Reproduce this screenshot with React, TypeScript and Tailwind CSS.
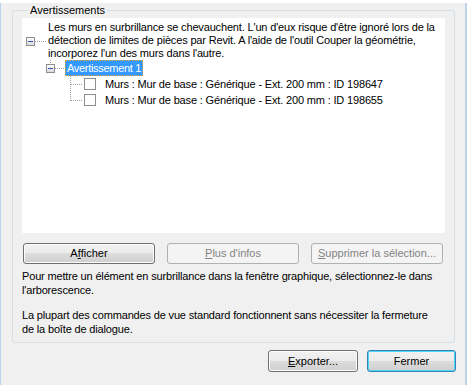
import React from "react";

const dot = "#a0a0a0";

function MinusBox({ x, y }: { x: number; y: number }) {
  return (
    <g>
      <defs>
        <linearGradient id="mb" x1="0" y1="0" x2="0" y2="1">
          <stop offset="0" stopColor="#ffffff" />
          <stop offset="1" stopColor="#d8d8d8" />
        </linearGradient>
      </defs>
      <rect x={x + 0.5} y={y + 0.5} width={8} height={8} fill="url(#mb)" stroke="#8e8f8f" />
      <line x1={x + 2} y1={y + 4.5} x2={x + 7} y2={y + 4.5} stroke="#2f56b5" />
    </g>
  );
}

function Checkbox() {
  return <div className="mt-[2px] h-[12px] w-[12px] shrink-0 border border-[#8f8f8f] bg-white" />;
}

function Button({
  children,
  disabled,
  primary,
  className,
}: {
  children: React.ReactNode;
  disabled?: boolean;
  primary?: boolean;
  className?: string;
}) {
  let look =
    "border-[#707070] bg-[linear-gradient(#f2f2f2,#ebebeb_50%,#dddddd_50%,#cfcfcf)] text-black shadow-[inset_0_0_0_1px_#fcfcfc]";
  if (disabled) look = "border-[#adb2b5] bg-[#f4f4f4] text-[#838383]";
  if (primary)
    look =
      "border-[#3c7fb1] bg-[linear-gradient(#f2f2f2,#ebebeb_50%,#dddddd_50%,#cfcfcf)] text-black shadow-[inset_0_0_0_1px_#48d8fb]";
  return (
    <button
      type="button"
      className={`flex items-center justify-center rounded-[3px] border text-[11px] leading-none ${look} ${className ?? ""}`}
    >
      {children}
    </button>
  );
}

export default function App() {
  return (
    <div className="h-[385px] w-[467px] border-b-2 border-l border-r-2 border-[#bcd3ec] bg-[#f0f0f0] font-['Liberation_Sans',Arial,sans-serif] text-black">
      <fieldset className="ml-[11px] mt-[3px] w-[443px] rounded-[3px] border border-[#d5dfe5] px-[9px] pb-[6px] pt-px">
        <legend className="ml-[6px] px-[2px] text-[11px] leading-[14px]">Avertissements</legend>

        <div className="h-[215px] bg-white pt-[3px] text-[11px] tracking-[-0.16px]">
          <div className="flex">
            <svg width="26" height="39" className="shrink-0" shapeRendering="crispEdges">
              <MinusBox x={4} y={16} />
              <line x1={13} y1={20.5} x2={25} y2={20.5} stroke={dot} strokeDasharray="1 1" />
            </svg>
            <div className="leading-[13px]">
              <div className="whitespace-nowrap">
                Les murs en surbrillance se chevauchent. L'un d'eux risque d'être ignoré lors de la
              </div>
              <div className="whitespace-nowrap">
                détection de limites de pièces par Revit. A l'aide de l'outil Couper la géométrie,
              </div>
              <div className="whitespace-nowrap">incorporez l'un des murs dans l'autre.</div>
            </div>
          </div>

          <div className="flex h-[16px]">
            <svg width="43" height="16" className="shrink-0" shapeRendering="crispEdges">
              <line x1={28.5} y1={-2} x2={28.5} y2={4} stroke={dot} strokeDasharray="1 1" />
              <MinusBox x={24} y={4} />
              <line x1={33} y1={8.5} x2={43} y2={8.5} stroke={dot} strokeDasharray="1 1" />
            </svg>
            <span className="flex h-[16px] items-center whitespace-nowrap bg-[#3399ff] px-[2px] tracking-[-0.3px] text-white outline-1 -outline-offset-1 outline-dotted outline-[#e8a33d]">
              Avertissement 1
            </span>
          </div>

          <div className="flex h-[16px]">
            <svg width="62" height="16" className="shrink-0" shapeRendering="crispEdges">
              <line x1={48.5} y1={0} x2={48.5} y2={16} stroke={dot} strokeDasharray="1 1" />
              <line x1={49} y1={8.5} x2={61} y2={8.5} stroke={dot} strokeDasharray="1 1" />
            </svg>
            <Checkbox />
            <span className="ml-[9px] whitespace-nowrap leading-[16px]">
              Murs : Mur de base : Générique - Ext. 200 mm : ID 198647
            </span>
          </div>
          <div className="flex h-[16px]">
            <svg width="62" height="16" className="shrink-0" shapeRendering="crispEdges">
              <line x1={48.5} y1={0} x2={48.5} y2={9} stroke={dot} strokeDasharray="1 1" />
              <line x1={49} y1={8.5} x2={61} y2={8.5} stroke={dot} strokeDasharray="1 1" />
            </svg>
            <Checkbox />
            <span className="ml-[9px] whitespace-nowrap leading-[16px]">
              Murs : Mur de base : Générique - Ext. 200 mm : ID 198655
            </span>
          </div>
        </div>

        <div className="mt-[10px] flex gap-[12px] pl-px">
          <Button className="h-[21px] w-[132px]">
            A<span className="underline">f</span>ficher
          </Button>
          <Button disabled className="h-[21px] w-[132px]">
            <span className="underline">P</span>lus d'infos
          </Button>
          <Button disabled className="h-[21px] w-[132px]">
            <span className="underline">S</span>upprimer la sélection...
          </Button>
        </div>

        <div className="mt-[5px] text-[11px] leading-[14px] tracking-[-0.16px]">
          <p>
            Pour mettre un élément en surbrillance dans la fenêtre graphique, sélectionnez-le dans
            <br />
            l'arborescence.
          </p>
          <p className="mt-[11px]">
            La plupart des commandes de vue standard fonctionnent sans nécessiter la fermeture
            <br />
            de la boîte de dialogue.
          </p>
        </div>
      </fieldset>

      <div className="mr-[9px] mt-[7px] flex justify-end gap-[9px]">
        <Button className="h-[22px] w-[90px]">
          <span className="underline">E</span>xporter...
        </Button>
        <Button primary className="h-[22px] w-[89px]">
          Fermer
        </Button>
      </div>
    </div>
  );
}
